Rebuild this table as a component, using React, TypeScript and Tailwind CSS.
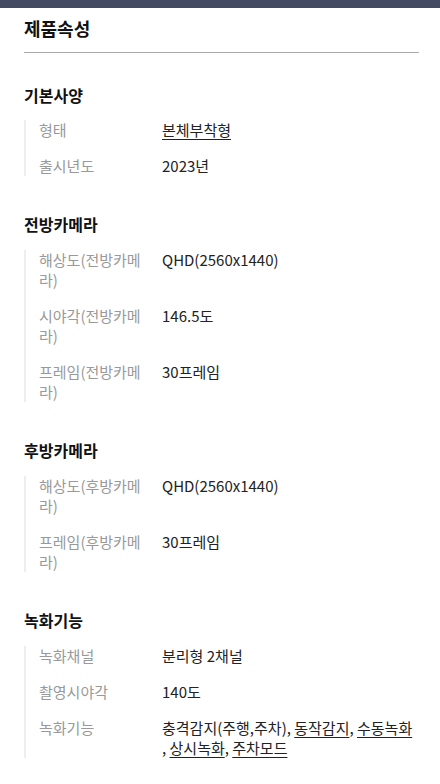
type Row = { label: string; value: React.ReactNode };

const Link = ({ children }: { children: React.ReactNode }) => (
  <span className="underline underline-offset-[3px] decoration-1">{children}</span>
);

const sections: { title: string; rows: Row[] }[] = [
  {
    title: "기본사양",
    rows: [
      { label: "형태", value: <Link>본체부착형</Link> },
      { label: "출시년도", value: "2023년" },
    ],
  },
  {
    title: "전방카메라",
    rows: [
      { label: "해상도(전방카메라)", value: "QHD(2560x1440)" },
      { label: "시야각(전방카메라)", value: "146.5도" },
      { label: "프레임(전방카메라)", value: "30프레임" },
    ],
  },
  {
    title: "후방카메라",
    rows: [
      { label: "해상도(후방카메라)", value: "QHD(2560x1440)" },
      { label: "프레임(후방카메라)", value: "30프레임" },
    ],
  },
  {
    title: "녹화기능",
    rows: [
      { label: "녹화채널", value: "분리형 2채널" },
      { label: "촬영시야각", value: "140도" },
      {
        label: "녹화기능",
        value: (
          <>
            충격감지(주행,주차)
            {["동작감지", "수동녹화", "상시녹화", "주차모드"].map((t) => (
              <span key={t} className="inline-block">
                ,&nbsp;<Link>{t}</Link>
              </span>
            ))}
          </>
        ),
      },
    ],
  },
];

export default function App() {
  return (
    <div className="min-h-[784px] bg-white font-['Noto_Sans_CJK_KR','Noto_Sans',sans-serif] text-[#222]">
      <div className="h-2 bg-[#434a62]" />
      <div className="pl-6 pr-[21px] pb-8">
        <h1 className="pt-2 text-[18px] leading-6 font-bold text-[#111]">제품속성</h1>
        <div className="mt-3 border-t border-[#a9a9a9]" />

        {sections.map((s, i) => (
          <section key={s.title} className={i === 0 ? "mt-[30px]" : "mt-9"}>
            <h2 className="text-[16px] leading-6 font-bold text-[#111]">{s.title}</h2>
            <div className={`${i === 0 ? "mt-[13px]" : "mt-[14px]"} flex flex-col gap-4 border-l-2 border-[#eeeeee] pl-[13px]`}>
              {s.rows.map((r) => (
                <div key={r.label} className="flex gap-3 text-[15px] leading-5">
                  <div className="w-[111px] shrink-0 text-[#999]">{r.label}</div>
                  <div className="flex-1 text-[#222]">{r.value}</div>
                </div>
              ))}
            </div>
          </section>
        ))}
      </div>
    </div>
  );
}
